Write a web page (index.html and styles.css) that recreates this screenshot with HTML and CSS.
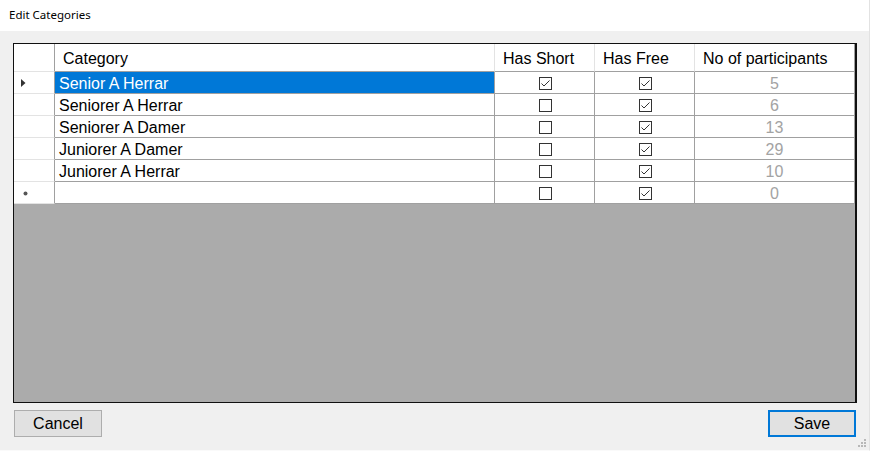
FILE: index.html
```html
<!DOCTYPE html>
<html>
<head>
<meta charset="utf-8">
<link rel="stylesheet" href="styles.css">
</head>
<body>
<div class="window">
  <div class="titlebar">Edit Categories</div>
  <div class="content">
    <div class="grid">
      <div class="table">
        <div class="rh hdr"></div>
        <div class="hc">Category</div>
        <div class="hc">Has Short</div>
        <div class="hc">Has Free</div>
        <div class="hc last">No of participants</div>

        <div class="rh cur"><svg width="5" height="8" viewBox="0 0 5 8"><path d="M0 0 L4.5 4 L0 8 Z" fill="#333"/></svg></div>
        <div class="c txt sel">Senior A Herrar</div>
        <div class="c chk"><svg class="box" width="13" height="13" viewBox="0 0 13 13"><rect x="0.5" y="0.5" width="12" height="12" fill="#fff" stroke="#333"/><path d="M2.5 6.5 L5 9 L10.5 3.5" fill="none" stroke="#333" stroke-width="1"/></svg></div>
        <div class="c chk"><svg class="box" width="13" height="13" viewBox="0 0 13 13"><rect x="0.5" y="0.5" width="12" height="12" fill="#fff" stroke="#333"/><path d="M2.5 6.5 L5 9 L10.5 3.5" fill="none" stroke="#333" stroke-width="1"/></svg></div>
        <div class="c num last">5</div>

        <div class="rh"></div>
        <div class="c txt">Seniorer A Herrar</div>
        <div class="c chk"><svg class="box" width="13" height="13" viewBox="0 0 13 13"><rect x="0.5" y="0.5" width="12" height="12" fill="#fff" stroke="#333"/></svg></div>
        <div class="c chk"><svg class="box" width="13" height="13" viewBox="0 0 13 13"><rect x="0.5" y="0.5" width="12" height="12" fill="#fff" stroke="#333"/><path d="M2.5 6.5 L5 9 L10.5 3.5" fill="none" stroke="#333" stroke-width="1"/></svg></div>
        <div class="c num last">6</div>

        <div class="rh"></div>
        <div class="c txt">Seniorer A Damer</div>
        <div class="c chk"><svg class="box" width="13" height="13" viewBox="0 0 13 13"><rect x="0.5" y="0.5" width="12" height="12" fill="#fff" stroke="#333"/></svg></div>
        <div class="c chk"><svg class="box" width="13" height="13" viewBox="0 0 13 13"><rect x="0.5" y="0.5" width="12" height="12" fill="#fff" stroke="#333"/><path d="M2.5 6.5 L5 9 L10.5 3.5" fill="none" stroke="#333" stroke-width="1"/></svg></div>
        <div class="c num last">13</div>

        <div class="rh"></div>
        <div class="c txt">Juniorer A Damer</div>
        <div class="c chk"><svg class="box" width="13" height="13" viewBox="0 0 13 13"><rect x="0.5" y="0.5" width="12" height="12" fill="#fff" stroke="#333"/></svg></div>
        <div class="c chk"><svg class="box" width="13" height="13" viewBox="0 0 13 13"><rect x="0.5" y="0.5" width="12" height="12" fill="#fff" stroke="#333"/><path d="M2.5 6.5 L5 9 L10.5 3.5" fill="none" stroke="#333" stroke-width="1"/></svg></div>
        <div class="c num last">29</div>

        <div class="rh"></div>
        <div class="c txt">Juniorer A Herrar</div>
        <div class="c chk"><svg class="box" width="13" height="13" viewBox="0 0 13 13"><rect x="0.5" y="0.5" width="12" height="12" fill="#fff" stroke="#333"/></svg></div>
        <div class="c chk"><svg class="box" width="13" height="13" viewBox="0 0 13 13"><rect x="0.5" y="0.5" width="12" height="12" fill="#fff" stroke="#333"/><path d="M2.5 6.5 L5 9 L10.5 3.5" fill="none" stroke="#333" stroke-width="1"/></svg></div>
        <div class="c num last">10</div>

        <div class="rh new"><svg width="5" height="5" viewBox="0 0 5 5"><circle cx="2.5" cy="2.5" r="2" fill="#555"/></svg></div>
        <div class="c txt"></div>
        <div class="c chk"><svg class="box" width="13" height="13" viewBox="0 0 13 13"><rect x="0.5" y="0.5" width="12" height="12" fill="#fff" stroke="#333"/></svg></div>
        <div class="c chk"><svg class="box" width="13" height="13" viewBox="0 0 13 13"><rect x="0.5" y="0.5" width="12" height="12" fill="#fff" stroke="#333"/><path d="M2.5 6.5 L5 9 L10.5 3.5" fill="none" stroke="#333" stroke-width="1"/></svg></div>
        <div class="c num last">0</div>
      </div>
    </div>
    <div class="buttons">
      <button class="btn">Cancel</button>
      <button class="btn primary">Save</button>
    </div>
  </div>
  <svg class="grip" width="9" height="9" viewBox="0 0 9 9">
    <rect x="6" y="0" width="2" height="2" fill="#b8b8b8"/>
    <rect x="3" y="3" width="2" height="2" fill="#b8b8b8"/>
    <rect x="6" y="3" width="2" height="2" fill="#b8b8b8"/>
    <rect x="0" y="6" width="2" height="2" fill="#b8b8b8"/>
    <rect x="3" y="6" width="2" height="2" fill="#b8b8b8"/>
    <rect x="6" y="6" width="2" height="2" fill="#b8b8b8"/>
  </svg>
</div>
</body>
</html>
```

FILE: styles.css
```css
* { box-sizing: border-box; }
html, body {
  margin: 0;
  padding: 0;
  background: #f0f0f0;
}
.window {
  position: relative;
  width: 870px;
  height: 451px;
  background: #f0f0f0;
  border-right: 1px solid #e2e2e2;
  border-bottom: 1px solid #fafafa;
  display: flex;
  flex-direction: column;
}
.titlebar {
  height: 31px;
  background: #ffffff;
  font-family: "Noto Sans", sans-serif;
  font-size: 11.5px;
  color: #000;
  padding: 7px 0 0 9px;
  line-height: 16px;
}
.content {
  padding: 12px 12px 0 13px;
  display: flex;
  flex-direction: column;
}
.grid {
  width: 844px;
  height: 360px;
  background: #ababab;
  border-top: 1px solid #101010;
  border-left: 1px solid #101010;
  border-bottom: 1px solid #101010;
  border-right: 2px solid #101010;
}
.table {
  display: grid;
  grid-template-columns: 41px 440px 100px 100px 160px;
  grid-auto-rows: 22px;
  grid-template-rows: 28px;
  background: #fff;
  font-family: "Liberation Sans", Arial, sans-serif;
  font-size: 16px;
  color: #000;
}
.rh {
  background: #fff;
  border-right: 1px solid #a0a0a0;
  border-bottom: 1px solid #e3e3e3;
  display: flex;
  align-items: center;
  justify-content: flex-start;
}
.rh svg { display: block; }
.rh.cur { padding-left: 7px; padding-top: 1px; }
.rh.new { padding-left: 9px; padding-top: 1px; }
.hc {
  background: #fff;
  border-right: 1px solid #e3e3e3;
  border-bottom: 1px solid #a0a0a0;
  padding: 4px 0 0 8px;
  line-height: 22px;
  white-space: nowrap;
}
.hc.last { border-right: 1px solid #a0a0a0; }
.c {
  background: #fff;
  border-right: 1px solid #a0a0a0;
  border-bottom: 1px solid #a0a0a0;
  line-height: 21px;
  white-space: nowrap;
}
.txt { padding: 1px 0 0 4px; }
.sel { background: #0078d7; color: #fff; }
.chk {
  display: flex;
  align-items: center;
  justify-content: center;
  padding-left: 1px;
  padding-top: 1px;
}
.box { display: block; }
.num {
  color: #a3a3a3;
  text-align: center;
  padding-top: 1px;
}
.buttons {
  display: flex;
  justify-content: space-between;
  padding: 7px 1px 0 1px;
}
.btn {
  width: 88px;
  height: 27px;
  background: #e1e1e1;
  border: 1px solid #adadad;
  font-family: "Liberation Sans", Arial, sans-serif;
  font-size: 16px;
  color: #000;
  padding: 0;
  margin: 0;
  line-height: 25px;
}
.btn.primary { border: 2px solid #0078d7; line-height: 23px; }
.grip {
  position: absolute;
  right: 2px;
  bottom: 2px;
}
```
